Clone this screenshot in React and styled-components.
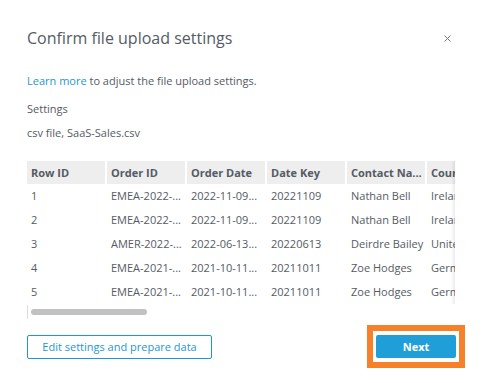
import React from "react";
import styled, { createGlobalStyle } from "styled-components";

const GlobalStyle = createGlobalStyle`
  html, body {
    margin: 0;
    padding: 0;
    background: #ffffff;
  }
  body {
    font-family: "Open Sans", "Noto Sans", "DejaVu Sans", sans-serif;
    color: #545b64;
  }
`;

const columns = [
  "Row ID",
  "Order ID",
  "Order Date",
  "Date Key",
  "Contact Na...",
  "Country",
  "City",
];

const rows = [
  ["1", "EMEA-2022-...", "2022-11-09...", "20221109", "Nathan Bell", "Ireland", "Dublin"],
  ["2", "EMEA-2022-...", "2022-11-09...", "20221109", "Nathan Bell", "Ireland", "Dublin"],
  ["3", "AMER-2022-...", "2022-06-13...", "20220613", "Deirdre Bailey", "United...", "New York"],
  ["4", "EMEA-2021-...", "2021-10-11...", "20211011", "Zoe Hodges", "Germany", "Berlin"],
  ["5", "EMEA-2021-...", "2021-10-11...", "20211011", "Zoe Hodges", "Germany", "Berlin"],
];

const Dialog = styled.div`
  width: 483px;
  height: 383px;
  box-sizing: border-box;
  display: flex;
  flex-direction: column;
  padding-top: 26px;
  overflow: hidden;
`;

const Header = styled.div`
  display: flex;
  justify-content: space-between;
  align-items: center;
  padding: 0 30px 0 27px;
`;

const Title = styled.h2`
  margin: 0;
  font-size: 16px;
  font-weight: 400;
  line-height: 24px;
  color: #545b64;
`;

const CloseButton = styled.button`
  border: none;
  background: none;
  padding: 0;
  width: 12px;
  height: 12px;
  display: flex;
  align-items: center;
  justify-content: center;
  cursor: pointer;
`;

const Content = styled.div`
  padding: 0 28px 0 27px;
  margin-top: 23px;
  font-size: 11px;
  line-height: 16px;
`;

const Text = styled.p`
  margin: 0 0 ${(p) => p.$gap || 0}px;
  color: #545b64;
`;

const Link = styled.a`
  color: #1f96d4;
  text-decoration: none;
`;

const TableFrame = styled.div`
  position: relative;
  margin-top: 20px;
  width: 428px;
  overflow: hidden;

  &::after {
    content: "";
    position: absolute;
    top: 0;
    right: 0;
    bottom: 0;
    width: 4px;
    background: linear-gradient(to right, rgba(0, 0, 0, 0), rgba(0, 0, 0, 0.08));
  }
`;

const Table = styled.table`
  width: ${columns.length * 80}px;
  border-collapse: separate;
  border-spacing: 0;
  table-layout: fixed;
`;

const HeadCell = styled.th`
  width: 80px;
  height: 23px;
  padding: 0 4px;
  box-sizing: border-box;
  background: #eeeeee;
  border-right: 2px solid #ffffff;
  text-align: left;
  font-size: 11px;
  font-weight: 700;
  color: #545b64;
  white-space: nowrap;
  overflow: hidden;
`;

const Cell = styled.td`
  height: 24px;
  padding: 0 4px;
  box-sizing: border-box;
  font-size: 11px;
  color: #545b64;
  white-space: nowrap;
  overflow: hidden;
`;

const ScrollTrack = styled.div`
  display: flex;
  align-items: center;
  height: 14px;
  margin-top: 1px;
  border-left: 1px solid #dddddd;
  padding-left: 3px;
`;

const ScrollThumb = styled.div`
  width: 116px;
  height: 6px;
  border-radius: 3px;
  background: #c1c1c1;
`;

const Footer = styled.div`
  display: flex;
  justify-content: space-between;
  align-items: center;
  padding: 0 18px 0 27px;
  margin-top: 6px;
`;

const OutlineButton = styled.button`
  width: 185px;
  height: 24px;
  box-sizing: border-box;
  border: 1px solid #1f96d4;
  border-radius: 2px;
  background: #ffffff;
  color: #1f96d4;
  font-family: inherit;
  font-size: 11px;
  padding: 0;
`;

const Highlight = styled.div`
  border: 6px solid #f5822a;
  padding: 4px 3px;
  display: flex;
`;

const PrimaryButton = styled.button`
  width: 80px;
  height: 23px;
  border: none;
  border-radius: 2px;
  background: #1f9ed8;
  color: #ffffff;
  font-family: inherit;
  font-size: 11px;
  font-weight: 700;
  padding: 0;
`;

export default function App() {
  return (
    <>
      <GlobalStyle />
      <Dialog>
        <Header>
          <Title>Confirm file upload settings</Title>
          <CloseButton aria-label="Close">
            <svg width="7" height="7" viewBox="0 0 7 7">
              <path d="M0.5 0.5 L6.5 6.5 M6.5 0.5 L0.5 6.5" stroke="#777" strokeWidth="1" />
            </svg>
          </CloseButton>
        </Header>
        <Content>
          <Text $gap={12}>
            <Link href="#">Learn more</Link> to adjust the file upload settings.
          </Text>
          <Text $gap={8}>Settings</Text>
          <Text>csv file, SaaS-Sales.csv</Text>
          <TableFrame>
            <Table>
              <thead>
                <tr>
                  {columns.map((c) => (
                    <HeadCell key={c}>{c}</HeadCell>
                  ))}
                </tr>
              </thead>
              <tbody>
                {rows.map((r) => (
                  <tr key={r[0]}>
                    {r.map((v, i) => (
                      <Cell key={i}>{v}</Cell>
                    ))}
                  </tr>
                ))}
              </tbody>
            </Table>
          </TableFrame>
          <ScrollTrack>
            <ScrollThumb />
          </ScrollTrack>
        </Content>
        <Footer>
          <OutlineButton>Edit settings and prepare data</OutlineButton>
          <Highlight>
            <PrimaryButton>Next</PrimaryButton>
          </Highlight>
        </Footer>
      </Dialog>
    </>
  );
}
